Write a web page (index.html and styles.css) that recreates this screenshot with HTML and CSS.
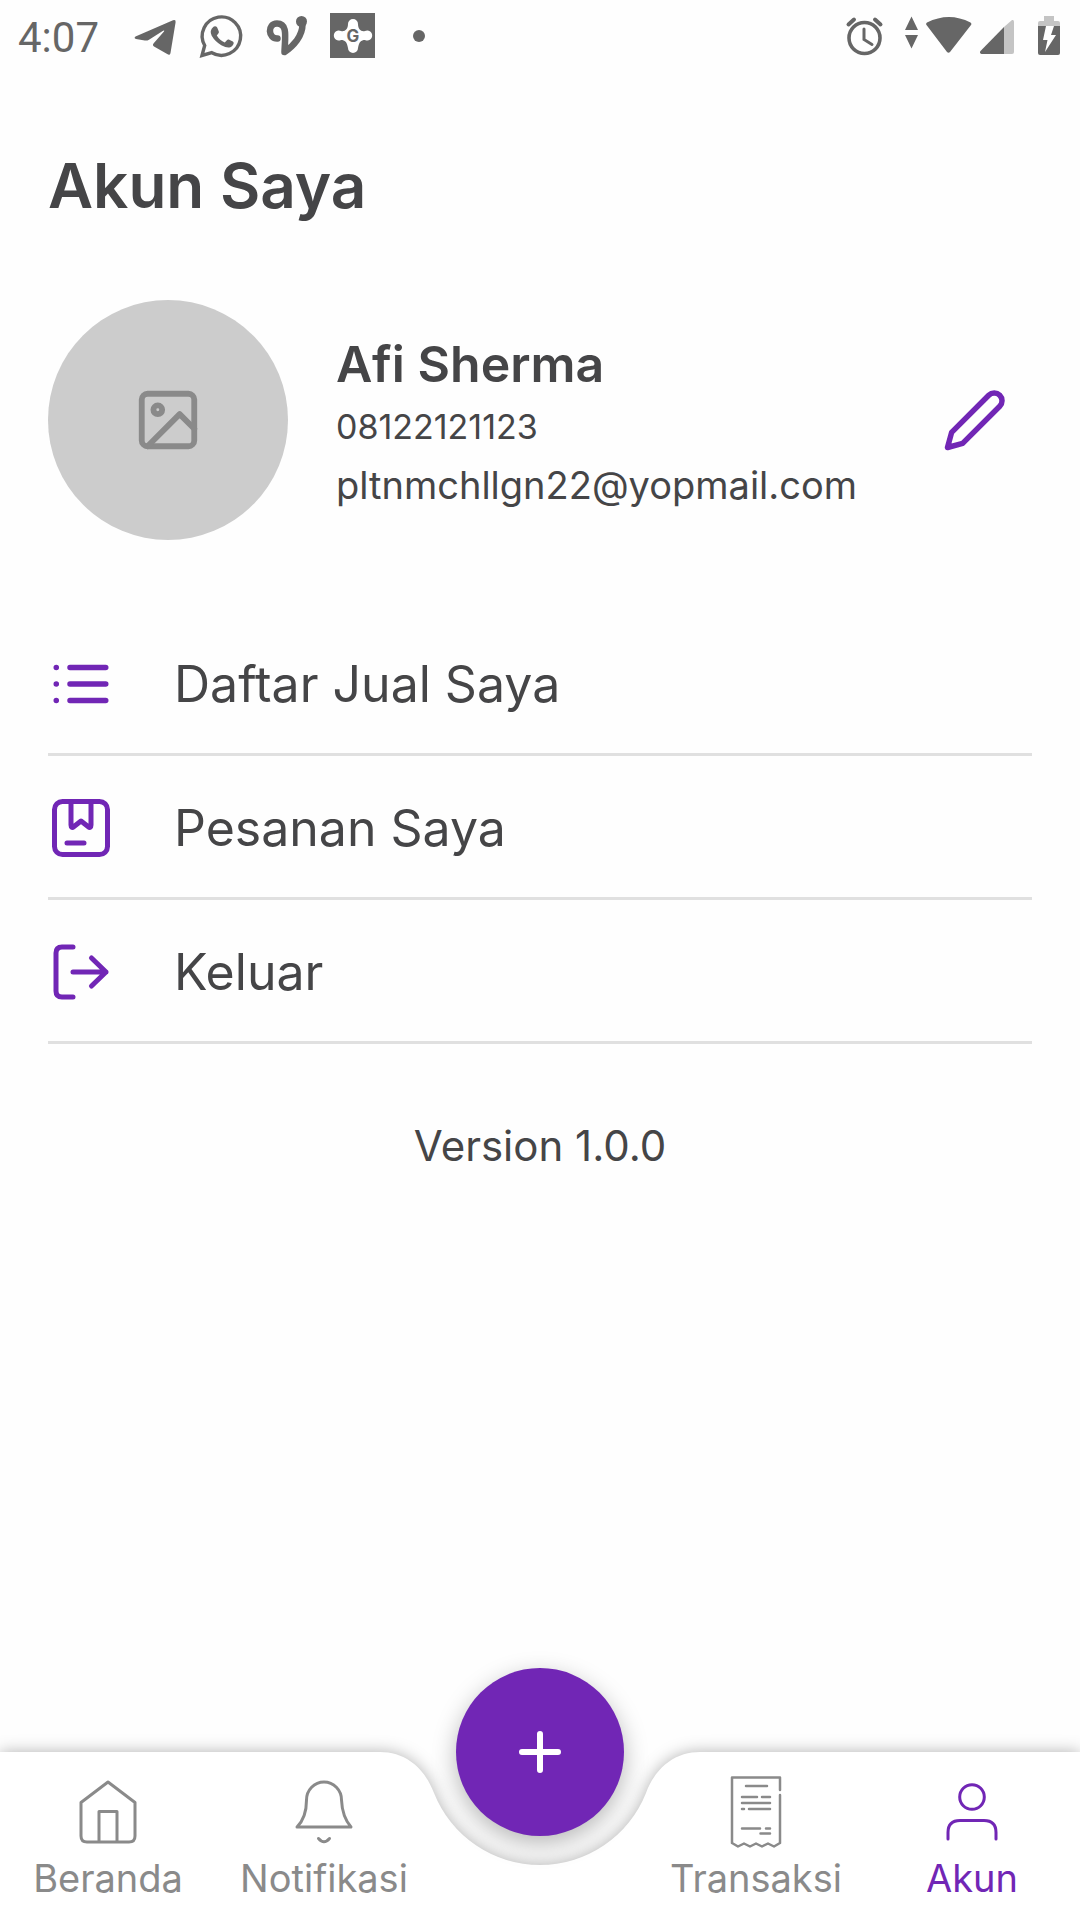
FILE: index.html
```html
<!DOCTYPE html>
<html lang="id">
<head>
<meta charset="utf-8">
<meta name="viewport" content="width=device-width, initial-scale=1">
<title>Akun Saya</title>
<link rel="stylesheet" href="styles.css">
</head>
<body>
<header class="status">
  <time class="clock">4:07</time>
  <div class="status-apps">
    <svg width="48" height="48" viewBox="0 0 48 48" aria-hidden="true"><path d="M4.500 24.500L42 8.200q3-1.100 2.600 2L39.500 41q-.6 3-3.300 1.100L23 34.400q-2-1.300-.3-3.200L33 19.500q.8-1.600-.9-.8L18 27.700q-2 1.200-4.200.8L5 27q-2.500-1-.5-2.500z" fill="currentColor"/></svg>
    <svg width="48" height="48" viewBox="0 0 48 48" aria-hidden="true"><path d="M5 43.500l2.700-10A19.200 19.200 0 1 1 14.800 40.700z" fill="none" stroke="currentColor" stroke-width="3.400"/><path d="M16.500 14.800q1-.8 2.600-.3.800.3 1.200 1.300l1.500 3.700q.3 1-.3 1.800l-1.700 2.200q3 5 8 7l2.300-2.600q.7-.8 1.700-.3l4 2q1 .6.900 1.600-.8 3.600-4.400 4.200-3 .4-8-2.200-6-3.300-9.600-9.400-2.700-5.200 1.800-9z" fill="currentColor"/></svg>
    <svg width="48" height="48" viewBox="0 0 48 48" aria-hidden="true"><g fill="none" stroke="currentColor" stroke-width="6.500" stroke-linecap="round" stroke-linejoin="round"><path d="M14.500 26.500C5 27 4 11.500 14 11.500 25 11.500 22 25 21.500 40c9-6 18-16 18-27.500"/></g><circle cx="38.500" cy="9.500" r="5.500" fill="currentColor"/></svg>
    <svg width="48" height="48" viewBox="0 0 48 48" aria-hidden="true"><path d="M1 1h45v45H1z" fill="currentColor"/><path d="M24 7a5 5 0 0 1 5 5c0 5 3 8 7 7a5 5 0 1 1 0 9c-4 0-6 2-7 8a5 5 0 0 1-10 0c-1-6-3-8-7-8a5 5 0 1 1 0-9c4 1 7-2 7-7a5 5 0 0 1 5-5z" fill="#fff"/><text x="24" y="30" text-anchor="middle" class="app-letter">G</text></svg>
    <svg width="48" height="48" viewBox="0 0 48 48" aria-hidden="true"><circle cx="24" cy="24" r="6" fill="currentColor"/></svg>
  </div>
  <div class="status-system">
    <svg width="40" height="48" viewBox="0 0 40 48" aria-hidden="true"><g fill="none" stroke="currentColor"><circle cx="20.500" cy="26" r="15.500" stroke-width="3.600"/><path d="M20 17v10.500l8 5" stroke-width="3" stroke-linecap="round"/><path d="M4.500 12.500l5.500-5M36.500 12.500l-5.500-5" stroke-width="4" stroke-linecap="round"/></g></svg>
    <div class="network">
      <svg width="68" height="48" viewBox="0 0 68 48" aria-hidden="true"><path d="M7.500 4.500L14 18H1zM1 23h13L7.500 36.500zM22.500 13Q21.500 11.500 23 10.500 45-.500 66.500 10.500 68 11.500 67 13L46 40q-1.500 1.500-3 0z" fill="currentColor"/></svg>
      <svg width="34" height="48" viewBox="0 0 34 48" aria-hidden="true"><path d="M24 42V15l8-7q2-.5 2 1.500V40q0 2-2 2z" fill="#c4c4c4"/><path d="M24 15v27H1.500Q-1 41 .5 39z" fill="currentColor"/></svg>
    </div>
    <svg width="30" height="48" viewBox="0 0 30 48" aria-hidden="true"><path d="M10 4h10v5h4q2 0 2 2v4H4v-4q0-2 2-2h4z" fill="#c4c4c4"/><path d="M4 14h22v27q0 2-2 2H6q-2 0-2-2z" fill="currentColor"/><path d="M12 14h8l-3 9h5L11 40l2.500-12H9z" fill="#fff"/></svg>
  </div>
</header>

<main class="account">
  <h1 class="title">Akun Saya</h1>

  <section class="profile">
    <div class="avatar">
      <svg width="70" height="70" viewBox="0 0 24 24" aria-hidden="true" class="line-icon"><rect x="3" y="3" width="18" height="18" rx="2"/><circle cx="8.500" cy="8.500" r="1.500"/><path d="M21 15l-5-5L5 21"/></svg>
    </div>
    <div class="identity">
      <h2 class="name">Afi Sherma</h2>
      <p class="contact phone">08122121123</p>
      <p class="contact">pltnmchllgn22@yopmail.com</p>
    </div>
    <button class="edit" type="button" aria-label="Ubah profil">
      <svg width="66" height="66" viewBox="0 0 24 24" aria-hidden="true" class="line-icon"><path d="M17 3a2.828 2.828 0 1 1 4 4L7.500 20.500 2 22l1.500-5.500L17 3z"/></svg>
    </button>
  </section>

  <nav class="menu" aria-label="Menu akun">
    <a class="menu-item" href="#jual">
      <svg width="66" height="66" viewBox="0 0 24 24" aria-hidden="true" class="line-icon"><path d="M8 6h13M8 12h13M8 18h13M3 6h.01M3 12h.01M3 18h.01"/></svg>
      <span>Daftar Jual Saya</span>
    </a>
    <a class="menu-item" href="#pesanan">
      <svg width="66" height="66" viewBox="0 0 66 66" aria-hidden="true" class="line-icon order-icon"><rect x="6.500" y="6.500" width="53" height="53" rx="8"/><path d="M23 7v23q0 4 3 1.500l7-5.500 7 5.500q3 2.500 3-1.500V7M19 48h17"/></svg>
      <span>Pesanan Saya</span>
    </a>
    <a class="menu-item" href="#keluar">
      <svg width="66" height="66" viewBox="0 0 66 66" aria-hidden="true" class="line-icon exit-icon"><path d="M25 8H14q-6 0-6 6v38q0 6 6 6h11M25 33h33M43.500 19L58 33 43.500 47"/></svg>
      <span>Keluar</span>
    </a>
  </nav>

  <p class="version">Version 1.0.0</p>
</main>

<nav class="tabs" aria-label="Navigasi utama">
  <div class="tabs-surface">
    <div class="tabs-side"></div>
    <svg width="320" height="168" viewBox="0 0 320 168" aria-hidden="true"><path d="M0 0C22 0 43 12 54 41A114 114 0 0 0 266 41C277 12 298 0 320 0V168H0z" fill="#fff"/></svg>
    <div class="tabs-side"></div>
  </div>
  <a class="tab" href="#beranda">
    <svg width="72" height="72" viewBox="0 0 72 72" aria-hidden="true" class="tab-icon"><path d="M9 26.500V60q0 6 6 6h42q6 0 6-6V26.500L36 6zM27 66V35.500h18V66"/></svg>
    <span>Beranda</span>
  </a>
  <a class="tab" href="#notifikasi">
    <svg width="72" height="72" viewBox="0 0 72 72" aria-hidden="true" class="tab-icon"><path d="M9 51c7-7 9.500-15 9.500-27a17.500 18 0 0 1 35 0c.5 12 3.500 20 9.500 27zM30.500 62.500q5.500 6.500 11 0"/></svg>
    <span>Notifikasi</span>
  </a>
  <button class="add" type="button" aria-label="Tambah">
    <svg width="48" height="48" viewBox="0 0 48 48" aria-hidden="true"><path d="M24 6v36M6 24h36" fill="none" stroke="currentColor" stroke-width="6" stroke-linecap="round"/></svg>
  </button>
  <a class="tab" href="#transaksi">
    <svg width="72" height="72" viewBox="0 0 72 72" aria-hidden="true" class="tab-icon receipt-icon"><path d="M60 14V1.500H12V67l6 3.500 6-3 6 3 6-3 6 3 6-3 6 3 6-3.500V19M26 10h21M22 21h15M42 21h8M22 27h28M22 33h2M29 33h21M22 52.500h18M46 52.500h4M40.500 57.500H50"/></svg>
    <span>Transaksi</span>
  </a>
  <a class="tab tab-active" href="#akun" aria-current="page">
    <svg width="72" height="72" viewBox="0 0 72 72" aria-hidden="true" class="tab-icon"><circle cx="36" cy="21" r="12.300"/><path d="M12 63v-6.500q0-12 12-12h24q12 0 12 12V63"/></svg>
    <span>Akun</span>
  </a>
</nav>
</body>
</html>
```
FILE: styles.css
```css
* {
  box-sizing: border-box;
}

body {
  margin: 0;
  min-height: 100vh;
  display: flex;
  flex-direction: column;
  background: #fefefe;
  color: #454547;
  font-family: Inter, "Open Sans", sans-serif;
}

h1, h2, p {
  margin: 0;
}

a {
  color: inherit;
  text-decoration: none;
}

button {
  padding: 0;
  border: 0;
  background: none;
  font: inherit;
  cursor: pointer;
}

svg {
  display: block;
  flex: none;
}

/* Status bar */
.status {
  display: flex;
  align-items: center;
  height: 72px;
  padding: 0 16px 0 18px;
  color: #666;
}

.clock {
  min-width: 113px;
  padding-top: 4px;
  font: 400 42px/72px Roboto, sans-serif;
}

.status-apps {
  display: flex;
  gap: 18px;
}

.app-letter {
  font: 700 17px Inter, sans-serif;
  fill: #666;
}

.status-system {
  display: flex;
  gap: 20px;
  margin-left: auto;
}

.network {
  display: flex;
  gap: 8px;
}

/* Account page */
.account {
  flex: 1;
  padding: 72px 48px 48px;
}

.title {
  font-size: 62px;
  font-weight: 600;
  line-height: 84px;
}

.line-icon {
  fill: none;
  stroke: currentColor;
  stroke-width: 2;
  stroke-linecap: round;
  stroke-linejoin: round;
}

.profile {
  display: flex;
  align-items: center;
  gap: 48px;
  margin-top: 72px;
}

.avatar {
  display: grid;
  place-items: center;
  flex: none;
  width: 240px;
  height: 240px;
  border-radius: 50%;
  background: #ccc;
  color: #8a8a8a;
}

.identity {
  flex: 1;
  min-width: 0;
  padding-top: 4px;
}

.name {
  font-size: 50px;
  font-weight: 600;
  line-height: 68px;
}

.contact {
  font-size: 38px;
  line-height: 58px;
}

.phone {
  font-size: 34px;
}

.edit {
  margin-right: 24px;
  color: #7126b5;
}

.menu {
  margin-top: 72px;
}

.menu-item {
  display: flex;
  align-items: center;
  gap: 60px;
  height: 144px;
  padding-top: 3px;
  border-bottom: 3px solid #e0e0e0;
  font-size: 50px;
}

.menu-item svg {
  color: #7126b5;
}

.order-icon {
  stroke-width: 5;
}

.exit-icon {
  stroke-width: 5;
}

.version {
  margin-top: 72px;
  font-size: 42px;
  line-height: 60px;
  text-align: center;
}

/* Bottom tabs */
.tabs {
  position: sticky;
  bottom: 0;
  display: grid;
  grid-template-columns: repeat(5, 1fr);
  height: 168px;
  color: #8a8a8a;
}

.tabs-surface {
  position: absolute;
  inset: 0;
  z-index: -1;
  display: flex;
  filter: drop-shadow(0 0 8px rgba(0, 0, 0, 0.3));
}

.tabs-side {
  flex: 1;
  background: #fff;
}

.tab {
  display: flex;
  flex-direction: column;
  align-items: center;
  padding-top: 24px;
  font-size: 38px;
  line-height: 60px;
}

.tab-active {
  color: #7126b5;
}

.tab-icon {
  fill: none;
  stroke: currentColor;
  stroke-width: 3;
  stroke-linecap: round;
  stroke-linejoin: round;
}

.receipt-icon {
  stroke-width: 2.5;
}

.add {
  display: grid;
  place-items: center;
  justify-self: center;
  width: 168px;
  height: 168px;
  margin-top: -84px;
  border-radius: 50%;
  background: #7126b5;
  color: #fff;
  box-shadow: 0 8px 24px rgba(0, 0, 0, 0.28);
}
```
